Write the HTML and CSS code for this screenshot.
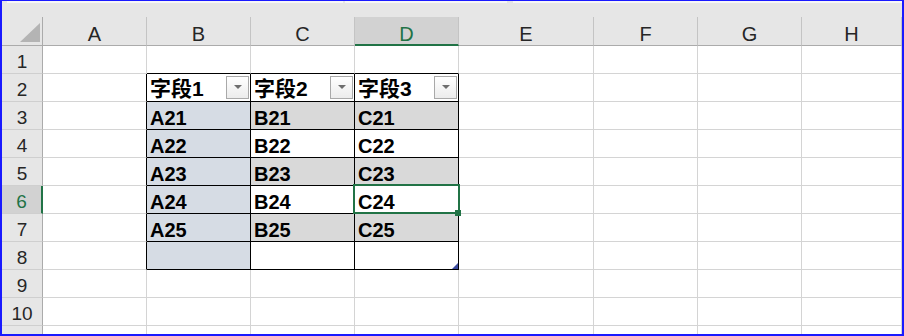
FILE: index.html
```html
<!DOCTYPE html>
<html lang="zh-CN">
<head>
<meta charset="UTF-8" />
<title>工作表</title>
<link rel="stylesheet" href="styles.css">
</head>
<body>

<div class="sheet">
  <div class="strip"><span class="seg s1"></span><span class="seg s2"></span><span class="seg s3"></span></div>

  <!-- 列标题 -->
  <div class="row head">
    <div class="h corner"><span class="all"></span></div>
    <div class="h">A</div>
    <div class="h">B</div>
    <div class="h">C</div>
    <div class="h sel">D</div>
    <div class="h">E</div>
    <div class="h">F</div>
    <div class="h">G</div>
    <div class="h">H</div>
  </div>

  <div class="row">
    <div class="c rh">1</div>
    <div class="c"></div>
    <div class="c tt"></div><div class="c tt"></div><div class="c tt"></div>
    <div class="c"></div><div class="c"></div><div class="c"></div><div class="c"></div>
  </div>

  <!-- 表头 -->
  <div class="row">
    <div class="c rh">2</div>
    <div class="c tl"></div>
    <div class="c tb fh">字段1<span class="dd"><i></i></span></div>
    <div class="c tb fh">字段2<span class="dd"><i></i></span></div>
    <div class="c tb fh">字段3<span class="dd"><i></i></span></div>
    <div class="c"></div><div class="c"></div><div class="c"></div><div class="c"></div>
  </div>

  <div class="row">
    <div class="c rh">3</div>
    <div class="c tl"></div>
    <div class="c tb f1 v">A21</div>
    <div class="c tb f2 v">B21</div>
    <div class="c tb f2 v">C21</div>
    <div class="c"></div><div class="c"></div><div class="c"></div><div class="c"></div>
  </div>

  <div class="row">
    <div class="c rh">4</div>
    <div class="c tl"></div>
    <div class="c tb f1 v">A22</div>
    <div class="c tb v">B22</div>
    <div class="c tb v">C22</div>
    <div class="c"></div><div class="c"></div><div class="c"></div><div class="c"></div>
  </div>

  <div class="row">
    <div class="c rh">5</div>
    <div class="c tl"></div>
    <div class="c tb f1 v">A23</div>
    <div class="c tb f2 v">B23</div>
    <div class="c tb f2 v">C23</div>
    <div class="c"></div><div class="c"></div><div class="c"></div><div class="c"></div>
  </div>

  <div class="row">
    <div class="c rh sel">6</div>
    <div class="c tl"></div>
    <div class="c tb f1 v">A24</div>
    <div class="c tb v">B24</div>
    <div class="c tb v">C24</div>
    <div class="c"></div><div class="c"></div><div class="c"></div><div class="c"></div>
  </div>

  <div class="row">
    <div class="c rh">7</div>
    <div class="c tl"></div>
    <div class="c tb f1 v">A25</div>
    <div class="c tb f2 v">B25</div>
    <div class="c tb f2 v">C25</div>
    <div class="c"></div><div class="c"></div><div class="c"></div><div class="c"></div>
  </div>

  <div class="row">
    <div class="c rh">8</div>
    <div class="c tl"></div>
    <div class="c tb f1"></div>
    <div class="c tb"></div>
    <div class="c tb end"><span class="resize"></span></div>
    <div class="c"></div><div class="c"></div><div class="c"></div><div class="c"></div>
  </div>

  <div class="row">
    <div class="c rh">9</div>
    <div class="c"></div><div class="c"></div><div class="c"></div><div class="c"></div>
    <div class="c"></div><div class="c"></div><div class="c"></div><div class="c"></div>
  </div>

  <div class="row">
    <div class="c rh">10</div>
    <div class="c"></div><div class="c"></div><div class="c"></div><div class="c"></div>
    <div class="c"></div><div class="c"></div><div class="c"></div><div class="c"></div>
  </div>

  <div class="row">
    <div class="c rh top">11</div>
    <div class="c"></div><div class="c"></div><div class="c"></div><div class="c"></div>
    <div class="c"></div><div class="c"></div><div class="c"></div><div class="c"></div>
  </div>

  <!-- 当前单元格 D6 -->
  <div class="cursor"></div>
  <div class="handle"></div>
</div>

</body>
</html>
```

FILE: styles.css
```css
* {
  box-sizing: border-box;
}
body {
  margin: 0;
  background-color: #fff;
  font-family: "Liberation Sans", "Noto Sans CJK SC", sans-serif;
  color: #000;
}
.sheet {
  position: relative;
  width: 904px;
  height: 336px;
  border: 2px solid #1a1aff;
  border-top-width: 1px;
  overflow: hidden;
}
.strip {
  display: flex;
  height: 2px;
  background-color: #e6e6e6;
  padding-left: 5px;
}
.seg {
  height: 2px;
  background-color: #f7f7f7;
}
.s1 { width: 336px; }
.s2 { width: 162px; margin-left: 2px; }
.s3 { flex: 1; margin-left: 6px; }

.row {
  display: grid;
  grid-template-columns: 41px 104px 104px 104px 104px 135px 104px 104px 1fr;
  height: 28px;
}
.c {
  border-right: 1px solid #d4d4d4;
  border-bottom: 1px solid #d4d4d4;
}

/* 列标题 */
.head {
  height: 43px;
  background-color: #e6e6e6;
  align-items: end;
}
.h {
  height: 29px;
  display: flex;
  align-items: flex-end;
  justify-content: center;
  font-size: 20px;
  line-height: 20px;
  padding-bottom: 1px;
  color: #262626;
  border-right: 1px solid #c4c4c4;
  border-bottom: 1px solid #ababab;
}
.h.sel {
  background-color: #d2d2d2;
  color: #217346;
  border-bottom: 2px solid #217346;
  padding-bottom: 0;
}
.corner {
  justify-content: flex-end;
  padding: 0 2px 3px 0;
  border-right-color: #ababab;
}
.all {
  width: 0;
  height: 0;
  border-left: 20px solid transparent;
  border-bottom: 19px solid #b4b4b4;
}

/* 行号 */
.rh {
  display: flex;
  align-items: flex-end;
  justify-content: center;
  background-color: #e6e6e6;
  font-size: 19px;
  line-height: 20px;
  padding-bottom: 1px;
  color: #262626;
  border-right-color: #ababab;
  border-bottom-color: #cfcfcf;
}
.rh.sel {
  background-color: #d2d2d2;
  color: #217346;
  border-right: 2px solid #217346;
}
.rh.top {
  align-items: flex-start;
  padding-top: 6px;
}

/* 表格区域 */
.tb {
  border-right-color: #000;
  border-bottom-color: #000;
}
.tl {
  border-right-color: #000;
}
.tt {
  border-bottom-color: #000;
}
.f1 {
  background-color: #d6dce4;
}
.f2 {
  background-color: #d9d9d9;
}
.v {
  display: flex;
  align-items: flex-end;
  padding-left: 3px;
  padding-bottom: 1px;
  font-size: 20px;
  line-height: 20px;
  font-weight: bold;
}
.fh {
  display: flex;
  align-items: flex-end;
  padding-left: 3px;
  padding-bottom: 1px;
  font-size: 21px;
  line-height: 22px;
  font-weight: bold;
}
.dd {
  display: flex;
  align-items: center;
  justify-content: center;
  align-self: center;
  width: 23px;
  height: 23px;
  margin: 0 1px 0 auto;
  border: 1px solid #a9a9a9;
  background: linear-gradient(#ffffff, #ececec);
}
.dd i {
  width: 0;
  height: 0;
  border-left: 4px solid transparent;
  border-right: 4px solid transparent;
  border-top: 4px solid #6e6e6e;
}
.end {
  display: flex;
  align-items: flex-end;
  justify-content: flex-end;
}
.resize {
  width: 0;
  height: 0;
  border-left: 6px solid transparent;
  border-bottom: 6px solid #3d4c9f;
}

/* 选中单元格 */
.cursor {
  position: absolute;
  left: 351px;
  top: 183px;
  width: 107px;
  height: 30px;
  border: 2px solid #217346;
}
.handle {
  position: absolute;
  left: 453px;
  top: 209px;
  width: 6px;
  height: 6px;
  background-color: #217346;
}
```
